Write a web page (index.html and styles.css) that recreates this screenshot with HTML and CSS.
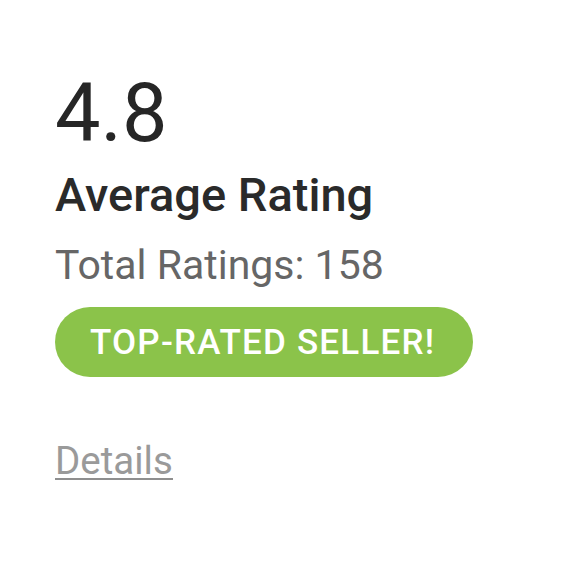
FILE: index.html
```html
<!DOCTYPE html>
<html>
<head>
<meta charset="utf-8">
<link rel="stylesheet" href="styles.css">
</head>
<body>
<div class="card">
  <div class="score">4.8</div>
  <div class="title">Average Rating</div>
  <div class="total">Total Ratings: 158</div>
  <div class="badge">TOP-RATED SELLER!</div>
  <a class="details" href="#">Details</a>
</div>
</body>
</html>
```
FILE: styles.css
```css
html, body {
  margin: 0;
  padding: 0;
  background: #ffffff;
}
body {
  font-family: Roboto, "Liberation Sans", sans-serif;
}
.card {
  display: flex;
  flex-direction: column;
  align-items: flex-start;
  padding: 73px 0 0 55px;
}
.score {
  font-size: 81px;
  line-height: 1;
  color: #262626;
  font-weight: 400;
}
.title {
  margin-top: 17px;
  font-size: 47px;
  line-height: 1;
  font-weight: 500;
  color: #2a2a2a;
}
.total {
  margin-top: 27px;
  font-size: 41px;
  line-height: 1;
  color: #666666;
}
.badge {
  margin-top: 21px;
  height: 70px;
  box-sizing: border-box;
  padding: 0 38px 0 35px;
  display: flex;
  align-items: center;
  background: #8bc34a;
  color: #ffffff;
  border-radius: 35px;
  font-size: 35px;
  font-weight: 500;
  letter-spacing: 1.2px;
}
.details {
  margin-top: 66px;
  font-size: 38.5px;
  line-height: 35px;
  color: #9a9a9a;
  text-decoration: none;
  border-bottom: 2px solid #8f8f8f;
}
```
